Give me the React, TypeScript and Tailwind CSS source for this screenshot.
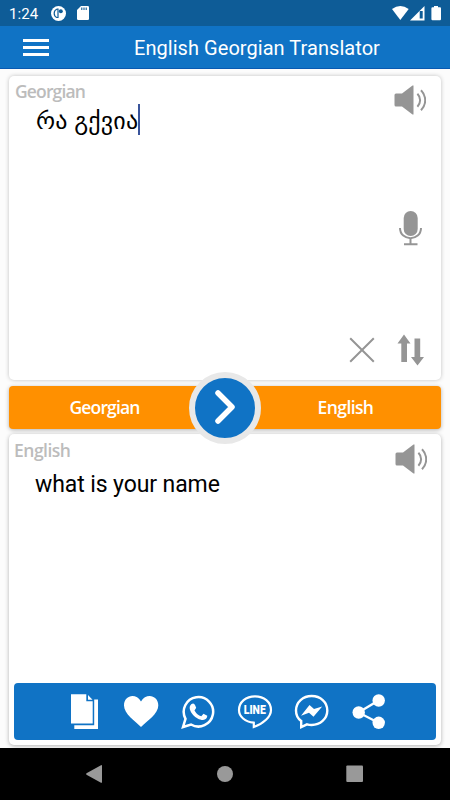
import type { ReactNode } from "react";
import { clsx } from "clsx";

interface GlyphProps {
  box: string;
  className?: string;
  children: ReactNode;
}

function Glyph({ box, className, children }: GlyphProps) {
  return (
    <svg viewBox={box} className={clsx("block shrink-0", className)} fill="currentColor" aria-hidden="true">
      {children}
    </svg>
  );
}

function SpeakerIcon() {
  return (
    <Glyph box="0 0 32 30" className="w-8 h-[30px]">
      <path d="M1 8.5 H8 L18.5 0.5 H19.5 V29.5 H18.5 L8 21.5 H2 Q0.5 21.5 0.5 20 V10 Q0.5 8.5 2 8.5Z" />
      <path
        d="M23.4 8.8 C27 12.5 27 18 23.4 21.8 M27 5.2 C32.6 11 32.6 19.5 27 25.2"
        fill="none"
        stroke="currentColor"
        strokeWidth="2"
      />
    </Glyph>
  );
}

function StatusBar() {
  return (
    <div className="flex h-[26px] items-center bg-[#0e5c97] pl-[9px] pr-2 text-white">
      <span className="w-[42px] pt-px text-[15px] leading-[26px] tracking-[0.1px]">1:24</span>
      <Glyph box="0 0 15 15" className="h-[15px] w-[15px]">
        <circle cx="7.5" cy="7.5" r="7.5" />
        <path d="M7 3.2 V11.5 H5.8 Q3.2 10.5 3.2 7.3 Q3.2 4 5.8 3.2Z" fill="none" stroke="#0e5c97" strokeWidth="1.2" />
        <circle cx="9.8" cy="5.2" r="2" fill="#0e5c97" />
      </Glyph>
      <Glyph box="0 0 12 14" className="ml-[11px] h-[14px] w-3">
        <path d="M4 0 H10.7 Q12 0 12 1.3 V12.7 Q12 14 10.7 14 H1.3 Q0 14 0 12.7 V4Z" />
        <path d="M4.8 1.5V4 M7 1.5V4 M9.2 1.5V4" stroke="#0e5c97" strokeWidth="1.1" />
      </Glyph>
      <Glyph box="393 5 50 17" className="ml-auto h-[17px] w-[50px]">
        <path d="M393 9 Q401.3 3 409.7 9 L401.3 20Z" />
        <path d="M425.5 6 V20.5 H411Z" />
        <path d="M420.7 11 H423.7 V18.5 H420.7Z" fill="#0e5c97" />
        <path d="M435 6 H439 V7.3 H441 Q442 7.3 442 8.5 V19 Q442 20.3 441 20.3 H433.5 Q432.4 20.3 432.4 19 V8.5 Q432.4 7.3 433.5 7.3 H435Z" />
      </Glyph>
    </div>
  );
}

function AppHeader() {
  return (
    <header className="flex h-[43px] items-center border-b border-[#0859b2] bg-[#1073c5] pl-[23px] text-white">
      <button className="flex flex-col gap-1 pt-px" aria-label="Menu">
        <span className="block h-[3px] w-[26px] bg-white" />
        <span className="block h-[3px] w-[26px] bg-white" />
        <span className="block h-[3px] w-[26px] bg-white" />
      </button>
      <h1 className="ml-[85px] whitespace-nowrap pt-[2px] text-[20px] tracking-[0.05px]">English Georgian Translator</h1>
    </header>
  );
}

function SourceCard() {
  return (
    <section className="flex h-[304px] justify-between rounded-[5px] bg-white shadow-[0_0_4px_rgba(0,0,0,0.24)]">
      <div className="pl-[6px] pt-[3px]">
        <p className="font-['Open_Sans'] text-[17.5px] font-semibold leading-6 tracking-[-0.85px] text-[#bcbcbc]">
          Georgian
        </p>
        <div className="ml-[21px] mt-px flex h-[31px] items-center">
          <span className="whitespace-nowrap font-['Noto_Sans','DejaVu_Sans',sans-serif] text-[24px] tracking-[0.2px]">
            რა გქვია
          </span>
          <span className="h-[31px] w-[2px] bg-[#39549b]" />
        </div>
      </div>
      <div className="flex flex-col items-end pr-[15px] pt-[9px] text-[#959595]">
        <button aria-label="Listen">
          <SpeakerIcon />
        </button>
        <button className="mr-1 mt-[95px]" aria-label="Speak">
          <Glyph box="0 0 23 36" className="h-9 w-[23px]">
            <rect x="4.7" y="1" width="14" height="25" rx="7" />
            <path
              d="M1 18 C1 31.5 22 31.5 22 18 M11.5 28.5 V34 M5 34.3 H18.5"
              fill="none"
              stroke="currentColor"
              strokeWidth="2"
            />
          </Glyph>
        </button>
        <div className="mr-[2px] mt-[88px] flex items-center gap-[22px]">
          <button aria-label="Clear">
            <Glyph box="0 0 26 26" className="h-[26px] w-[26px]">
              <path d="M1.2 1.2 L24.8 24.8 M24.8 1.2 L1.2 24.8" stroke="currentColor" strokeWidth="2" />
            </Glyph>
          </button>
          <button aria-label="Swap text">
            <Glyph box="0 0 27 32" className="h-8 w-[27px]">
              <path d="M7 0.5 L13.5 9.5 H10 V28 H4.3 V9.5 H0.5Z" />
              <path d="M17.5 4.5 H23.2 V23 H27 L20.5 31.5 L14 23 H17.5Z" />
            </Glyph>
          </button>
        </div>
      </div>
    </section>
  );
}

function LanguageBar() {
  return (
    <div className="relative mt-[6px] flex h-[43px] rounded-[4px] bg-[#ff9000] font-['Open_Sans'] text-[17.5px] font-semibold tracking-[-0.85px] text-white shadow-[0_1px_4px_rgba(0,0,0,0.3)]">
      <button className="w-[191px]">Georgian</button>
      <button className="ml-auto w-[191px] tracking-[-0.6px]">English</button>
      <button
        className="absolute left-[180px] top-[-14px] flex size-[72px] items-center justify-center rounded-full border-[6px] border-[#e8e8e8] bg-[#1073c5]"
        aria-label="Translate"
      >
        <Glyph box="0 0 20 34" className="mb-[2px] h-[34px] w-5">
          <path
            d="M3 3 L17 17 L3 31"
            fill="none"
            stroke="currentColor"
            strokeWidth="5.5"
            strokeLinecap="round"
            strokeLinejoin="round"
          />
        </Glyph>
      </button>
    </div>
  );
}

function ShareBar() {
  return (
    <div className="mx-[5px] mb-[5px] mt-auto flex h-[57px] items-center rounded-[4px] bg-[#1073c5] pl-14 text-white">
      <Glyph box="70 694 28 37" className="h-[37px] w-7">
        <path d="M71 695.3 H86.3 V702.2 H92.7 V724.5 H71Z" />
        <path d="M88 696 L92.5 700.7 H88Z" />
        <path d="M94.2 700.5 H98 V730 H74.3 V726.3 H94.2Z" />
      </Glyph>
      <Glyph box="123 694 36 37" className="ml-[25px] h-[37px] w-9">
        <path d="M141 728 C135 722 124 715 124 706.5 C124 696 136 693.5 141 702.5 C146 693.5 158.3 696 158.3 706.5 C158.3 715 147 722 141 728Z" />
      </Glyph>
      <Glyph box="181 694 34 37" className="ml-[22px] h-[37px] w-[34px]">
        <path
          d="M183 728 L185.5 719.8 A14.7 14.7 0 1 1 191 725.5Z"
          fill="none"
          stroke="currentColor"
          strokeWidth="2.5"
        />
        <path d="M191.2 705.3 Q193.8 703.3 195 706 L196.2 708.8 L194.5 711.5 Q197 716 201.3 717.2 L203.5 714.8 L207.3 716.8 Q207 720.8 203 721 C196 721 188 712 190 707Z" />
      </Glyph>
      <Glyph box="237 694 36 37" className="ml-[22px] h-[37px] w-9">
        <path
          d="M253.8 728 V723.7 C245 723 239 717.5 239 711 C239 703 246 697.3 255 697.3 S271 703 271 711 C271 718 263.5 724.5 253.8 728Z"
          fill="none"
          stroke="currentColor"
          strokeWidth="2.2"
        />
        <text
          x="243.8"
          y="715"
          textLength="22"
          lengthAdjust="spacingAndGlyphs"
          className="font-[Roboto] text-[12.5px] font-black"
        >
          LINE
        </text>
      </Glyph>
      <Glyph box="294 694 36 37" className="ml-[21px] h-[37px] w-9">
        <path
          d="M301.2 728 V722 C297.5 719.5 296 715.5 296 711.5 C296 703 303 697 311.7 697 S327.3 703 327.3 711.5 S320 726 311.7 726 C310 726 308.5 725.8 307 725.3Z"
          fill="none"
          stroke="currentColor"
          strokeWidth="2.4"
        />
        <path d="M301 716.8 L309.5 706 L314 710 L322.2 707.5 L313.5 717.8 L309 713.8Z" />
      </Glyph>
      <Glyph box="351 694 36 37" className="ml-[21px] h-[37px] w-9">
        <path d="M378.5 701.5 L358.5 713.5 L378.5 723.8" fill="none" stroke="currentColor" strokeWidth="2.3" />
        <circle cx="378.7" cy="701.5" r="6.2" />
        <circle cx="358.7" cy="713.5" r="6.2" />
        <circle cx="378.7" cy="723.8" r="6.2" />
      </Glyph>
    </div>
  );
}

function ResultCard() {
  return (
    <section className="mt-[5px] flex h-[311px] flex-col rounded-[5px] bg-white shadow-[0_1px_4px_rgba(0,0,0,0.3)]">
      <div className="flex justify-between">
        <div className="pl-[5px] pt-1">
          <p className="font-['Open_Sans'] text-[17.5px] font-semibold leading-6 tracking-[-0.5px] text-[#bcbcbc]">
            English
          </p>
          <p className="ml-[21px] mt-[9px] whitespace-nowrap text-[23px] leading-[28px] tracking-[-0.1px]">
            what is your name
          </p>
        </div>
        <button className="mr-[14px] mt-[10px] self-start text-[#959595]" aria-label="Listen">
          <SpeakerIcon />
        </button>
      </div>
      <ShareBar />
    </section>
  );
}

function NavigationBar() {
  return (
    <nav className="h-[52px] bg-black text-[#999999]">
      <Glyph box="0 748 450 52" className="h-[52px] w-[450px]">
        <path d="M86.5 773.2 L101 765.2 Q102 764.8 102 766 V782 Q102 783.2 101 782.7 L86.5 774.7 Q85.6 774 86.5 773.2Z" />
        <circle cx="225" cy="774" r="8" />
        <rect x="346.3" y="765.5" width="16.7" height="16.5" rx="1" />
      </Glyph>
    </nav>
  );
}

export default function App() {
  return (
    <div className="flex h-[800px] w-[450px] flex-col overflow-hidden bg-[#fcfcfc] font-[Roboto,sans-serif] text-black">
      <StatusBar />
      <AppHeader />
      <main className="flex-1 px-[9px] pt-[7px]">
        <SourceCard />
        <LanguageBar />
        <ResultCard />
      </main>
      <NavigationBar />
    </div>
  );
}
